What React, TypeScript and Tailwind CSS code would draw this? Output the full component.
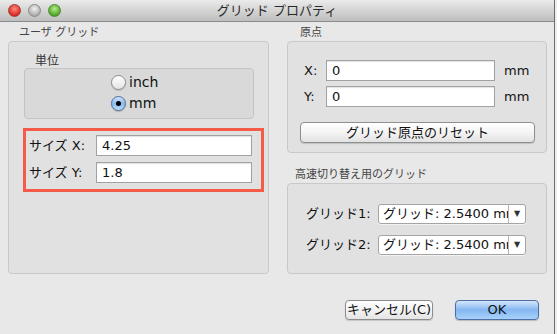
import React from "react";

const font = "font-['Lucida_Grande','DejaVu_Sans','Noto_Sans_CJK_JP',sans-serif]";

function Light({ from, to, border }: { from: string; to: string; border: string }) {
  return (
    <div
      className="w-[13px] h-[13px] rounded-full border"
      style={{ background: `radial-gradient(circle at 50% 35%, ${from}, ${to} 75%)`, borderColor: border }}
    />
  );
}

function Radio({ label, checked }: { label: string; checked?: boolean }) {
  return (
    <div className="flex items-center h-[21px] gap-[3px]">
      {checked ? (
        <div className="w-[15px] h-[15px] rounded-full border border-[#4a6c9b] bg-gradient-to-b from-[#d4e6fb] via-[#8ab8ef] to-[#bcdcfc] flex items-center justify-center shadow-[0_1px_1px_rgba(0,0,0,0.2)]">
          <div className="w-[5px] h-[5px] rounded-full bg-black" />
        </div>
      ) : (
        <div className="w-[15px] h-[15px] rounded-full border border-[#8c8c8c] bg-gradient-to-b from-[#ffffff] via-[#f2f2f2] to-[#e4e4e4] shadow-[0_1px_1px_rgba(0,0,0,0.15)]" />
      )}
      <span className="text-[14px] text-[#111]">{label}</span>
    </div>
  );
}

function TextBox({ value, className }: { value: string; className: string }) {
  return (
    <div className={`h-[21px] bg-white border border-[#a2a2a2] shadow-[inset_0_1px_1px_rgba(0,0,0,0.12)] flex items-center pl-[5px] text-[13px] text-[#111] ${className}`}>
      {value}
    </div>
  );
}

function Select({ value }: { value: string }) {
  return (
    <div className="w-[148px] h-[20px] bg-white border border-[#a4a4a4] rounded-[3px] flex items-center shadow-[0_1px_0_rgba(255,255,255,0.6)]">
      <div className="flex-1 overflow-hidden whitespace-nowrap pl-[4px] text-[13px] text-[#111] leading-[18px]">{value}</div>
      <div className="w-[17px] h-full border-l border-[#b4b4b4] flex items-center justify-center text-[8px] text-[#333]">▼</div>
    </div>
  );
}

function GroupLabel({ children, pl }: { children: React.ReactNode; pl: string }) {
  return <div className={`h-[17px] leading-[17px] text-[11px] text-[#444] ${pl}`}>{children}</div>;
}

export default function App() {
  return (
    <div className={`w-[557px] h-[334px] bg-[#ededed] ${font}`}>
      <div className="w-[555px] h-[334px] bg-[#e8e8e8] border-r border-[#6e6e6e] flex flex-col">
        {/* title bar */}
        <div className="h-[22px] shrink-0 bg-gradient-to-b from-[#ebebeb] to-[#bebebe] border-b border-[#8b8b8b] flex items-center relative">
          <div className="flex items-center gap-[7px] pl-[8px]">
            <Light from="#ff8a80" to="#d7251c" border="#a33b33" />
            <Light from="#f2f2f2" to="#a9a9a9" border="#8a8a8a" />
            <Light from="#b6ec8d" to="#4aa122" border="#4f8a2f" />
          </div>
          <div className="absolute inset-0 flex items-center justify-center text-[13px] text-[#2a2a2a]">
            グリッド プロパティ
          </div>
        </div>

        <div className="flex pt-[2px] pl-[8px] gap-[18px]">
          {/* left column */}
          <div className="w-[261px] flex flex-col">
            <GroupLabel pl="pl-[11px]">ユーザ グリッド</GroupLabel>
            <div className="h-[233px] bg-[#e1e1e1] border border-[#c9c9c9] rounded-[4px] pl-[15px] pr-[14px] pt-[12px]">
              <div className="h-[14px] leading-[14px] text-[12px] text-[#333] pl-[11px]">単位</div>
              <div className="h-[51px] bg-[#d9d9d9] border border-[#c4c4c4] rounded-[4px] pl-[86px] pt-[3px]">
                <Radio label="inch" />
                <Radio label="mm" checked />
              </div>
              <div className="mt-[9px] -ml-[1px] w-[241px] border-[3px] border-[#f45c49] pl-[3px] pt-[4px] pb-[6px] flex flex-col gap-[6px]">
                <div className="flex items-center">
                  <span className="w-[67px] text-[13px] text-[#111]">サイズ X:</span>
                  <TextBox value="4.25" className="w-[156px]" />
                </div>
                <div className="flex items-center">
                  <span className="w-[67px] text-[13px] text-[#111]">サイズ Y:</span>
                  <TextBox value="1.8" className="w-[156px]" />
                </div>
              </div>
            </div>
          </div>

          {/* right column */}
          <div className="w-[260px] flex flex-col">
            <GroupLabel pl="pl-[13px]">原点</GroupLabel>
            <div className="h-[112px] bg-[#e1e1e1] border border-[#c9c9c9] rounded-[4px] pt-[18px] flex flex-col">
              <div className="flex items-center h-[21px] pl-[16px]">
                <span className="w-[22px] text-[13px] text-[#111]">X:</span>
                <TextBox value="0" className="w-[169px]" />
                <span className="ml-[9px] text-[13px] text-[#111]">mm</span>
              </div>
              <div className="flex items-center h-[21px] pl-[16px] mt-[5px]">
                <span className="w-[22px] text-[13px] text-[#111]">Y:</span>
                <TextBox value="0" className="w-[169px]" />
                <span className="ml-[9px] text-[13px] text-[#111]">mm</span>
              </div>
              <div className="mt-[15px] ml-[12px] w-[235px] h-[21px] rounded-[4px] border border-[#8f8f8f] bg-gradient-to-b from-[#ffffff] via-[#f4f4f4] to-[#e2e2e2] shadow-[0_1px_1px_rgba(0,0,0,0.15)] flex items-center justify-center text-[13px] text-[#111]">
                グリッド原点のリセット
              </div>
            </div>

            <div className="mt-[13px]">
              <GroupLabel pl="pl-[8px]">高速切り替え用のグリッド</GroupLabel>
            </div>
            <div className="h-[91px] bg-[#e1e1e1] border border-[#c9c9c9] rounded-[4px] pt-[20px] flex flex-col gap-[11px]">
              <div className="flex items-center pl-[18px]">
                <span className="w-[72px] text-[13px] text-[#111]">グリッド1:</span>
                <Select value="グリッド: 2.5400 mm" />
              </div>
              <div className="flex items-center pl-[18px]">
                <span className="w-[72px] text-[13px] text-[#111]">グリッド2:</span>
                <Select value="グリッド: 2.5400 mm" />
              </div>
            </div>
          </div>
        </div>

        {/* buttons */}
        <div className="flex justify-end gap-[22px] pr-[15px] mt-[26px]">
          <div className="w-[88px] h-[20px] rounded-[4px] border border-[#8c8c8c] bg-gradient-to-b from-[#ffffff] via-[#f3f3f3] to-[#e4e4e4] shadow-[0_1px_1px_rgba(0,0,0,0.15)] flex items-center justify-center text-[13px] text-[#111]">
            キャンセル(C)
          </div>
          <div className="w-[84px] h-[20px] rounded-[4px] border border-[#4d6fa6] bg-gradient-to-b from-[#d5e7fc] via-[#84b6f0] to-[#a9d2fb] shadow-[0_1px_1px_rgba(0,0,0,0.2)] flex items-center justify-center text-[13px] text-[#111]">
            OK
          </div>
        </div>
      </div>
    </div>
  );
}
